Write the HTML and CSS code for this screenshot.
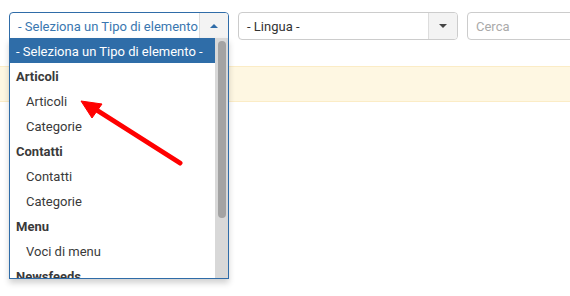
FILE: index.html
```html
<!DOCTYPE html>
<html lang="it">
<head>
<meta charset="utf-8">
<link rel="stylesheet" href="styles.css">
</head>
<body>
<div class="page">
  <div class="toolbar">
    <div class="chosen open">
      <div class="chosen-single">
        <span class="chosen-text">- Seleziona un Tipo di elemento</span>
        <span class="chosen-btn"><span class="tri up"></span></span>
      </div>
      <div class="chosen-drop">
        <div class="drop-list">
          <div class="opt hl">- Seleziona un Tipo di elemento -</div>
          <div class="opt grp">Articoli</div>
          <div class="opt sub">Articoli</div>
          <div class="opt sub">Categorie</div>
          <div class="opt grp">Contatti</div>
          <div class="opt sub">Contatti</div>
          <div class="opt sub">Categorie</div>
          <div class="opt grp">Menu</div>
          <div class="opt sub">Voci di menu</div>
          <div class="opt grp">Newsfeeds</div>
        </div>
        <div class="scrollbar"><div class="thumb"></div></div>
      </div>
    </div>
    <div class="chosen">
      <div class="chosen-single plain">
        <span class="chosen-text dark">- Lingua -</span>
        <span class="chosen-btn"><span class="tri down"></span></span>
      </div>
    </div>
    <div class="search"><span class="ph">Cerca</span></div>
  </div>
  <div class="alert"></div>
</div>
<svg class="arrow" width="570" height="296" viewBox="0 0 570 296">
  <line x1="180" y1="163" x2="95" y2="109" stroke="#ff0000" stroke-width="5" stroke-linecap="round"/>
  <polygon points="81,101 102,104 92,118" fill="#ff0000" stroke="#ff0000" stroke-width="1" stroke-linejoin="round"/>
</svg>
</body>
</html>
```
FILE: styles.css
```css
html, body {
  margin: 0;
  padding: 0;
  background: #fff;
  font-family: Roboto, "Liberation Sans", Arial, sans-serif;
  font-size: 13px;
  color: #333;
}
.page {
  width: 570px;
  height: 296px;
  overflow: hidden;
}
.toolbar {
  display: flex;
  gap: 9px;
  padding: 12px 0 0 9px;
}
.chosen {
  position: relative;
  width: 220px;
  flex: none;
}
.chosen-single {
  box-sizing: border-box;
  height: 28px;
  display: flex;
  align-items: stretch;
  border: 1px solid #ccc;
  border-radius: 4px;
  background: #fff;
}
.open .chosen-single {
  border-color: #2f6ca8;
  border-radius: 4px 4px 0 0;
}
.chosen-text {
  flex: 1;
  padding-left: 8px;
  padding-top: 1px;
  line-height: 26px;
  color: #3a77b0;
  white-space: nowrap;
  overflow: hidden;
}
.chosen-text.dark {
  color: #333;
}
.chosen-btn {
  width: 28px;
  flex: none;
  border-left: 1px solid #ddd;
  background: #f3f3f3;
  display: flex;
  align-items: center;
  justify-content: center;
  border-radius: 0 3px 3px 0;
}
.open .chosen-btn {
  border-radius: 0 3px 0 0;
}
.tri {
  width: 0;
  height: 0;
  border-left: 4px solid transparent;
  border-right: 4px solid transparent;
}
.tri.up {
  border-bottom: 4px solid #2f6ca8;
}
.tri.down {
  border-top: 4px solid #444;
}
.chosen-drop {
  position: absolute;
  left: 0;
  top: 26px;
  width: 220px;
  height: 241px;
  box-sizing: border-box;
  border: 1px solid #2f6ca8;
  border-top: 0;
  background: #fff;
  display: flex;
  box-shadow: 0 4px 6px rgba(0,0,0,0.18);
  z-index: 2;
}
.drop-list {
  flex: 1;
  overflow: hidden;
}
.opt {
  height: 25px;
  line-height: 27px;
  white-space: nowrap;
  color: #3a3a3a;
}
.opt.hl {
  background: #2f6da8;
  color: #fff;
  padding-left: 6px;
}
.opt.grp {
  font-weight: bold;
  padding-left: 6px;
}
.opt.sub {
  padding-left: 16px;
}
.scrollbar {
  width: 13px;
  flex: none;
  background: #d8d8d8;
  padding: 3px 2px 0 3px;
  box-sizing: border-box;
}
.thumb {
  height: 177px;
  background: #a3a3a3;
  border-radius: 4px;
}
.search {
  box-sizing: border-box;
  width: 140px;
  height: 28px;
  border: 1px solid #ccc;
  border-radius: 4px;
  padding-left: 8px;
  padding-top: 1px;
  line-height: 26px;
  flex: none;
}
.ph {
  color: #aaa;
}
.alert {
  margin-top: 26px;
  height: 36px;
  box-sizing: border-box;
  background: #fef7e2;
  border-top: 1px solid #fbecc6;
  border-bottom: 1px solid #fbecc6;
}
.arrow {
  position: absolute;
  left: 0;
  top: 0;
  z-index: 3;
  pointer-events: none;
}
```
